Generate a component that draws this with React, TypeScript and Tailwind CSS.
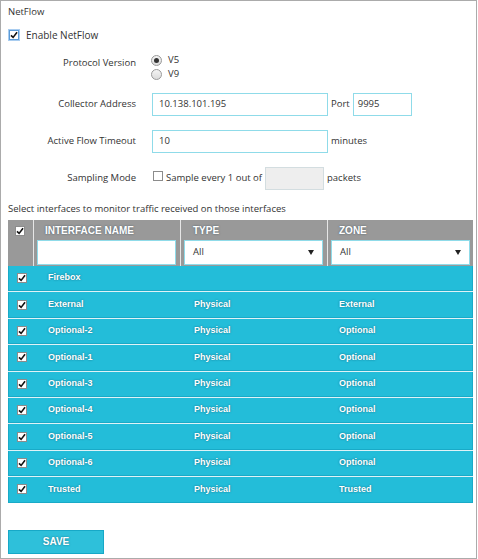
import React from 'react';

type Row = { name: string; type: string; zone: string };

const ROWS: Row[] = [
  { name: 'Firebox', type: '', zone: '' },
  { name: 'External', type: 'Physical', zone: 'External' },
  { name: 'Optional-2', type: 'Physical', zone: 'Optional' },
  { name: 'Optional-1', type: 'Physical', zone: 'Optional' },
  { name: 'Optional-3', type: 'Physical', zone: 'Optional' },
  { name: 'Optional-4', type: 'Physical', zone: 'Optional' },
  { name: 'Optional-5', type: 'Physical', zone: 'Optional' },
  { name: 'Optional-6', type: 'Physical', zone: 'Optional' },
  { name: 'Trusted', type: 'Physical', zone: 'Trusted' },
];

function Check({ checked = true, focus = false }: { checked?: boolean; focus?: boolean }) {
  return (
    <span
      className={`inline-flex h-[10px] w-[10px] shrink-0 items-center justify-center border bg-white ${
        focus ? 'border-[#5b9bd8] outline outline-1 outline-[#a9cdf0]' : 'border-[#8c8c8c]'
      }`}
    >
      {checked && (
        <svg viewBox="0 0 10 10" className="h-[8px] w-[8px]">
          <path d="M1.2 5.4 L3.9 8 L8.8 1.6" fill="none" stroke="#111" strokeWidth="2" />
        </svg>
      )}
    </span>
  );
}

function Radio({ checked }: { checked: boolean }) {
  return (
    <span className="inline-flex h-[11px] w-[11px] items-center justify-center rounded-full border border-[#9a9a9a] bg-gradient-to-b from-[#f4f4f4] to-[#dcdcdc]">
      {checked && <span className="h-[5px] w-[5px] rounded-full bg-[#333]" />}
    </span>
  );
}

function Select() {
  return (
    <div className="flex h-[25px] items-center justify-between border border-[#8fdbe9] bg-white pl-[8px] pr-[8px] font-['Open_Sans'] text-[9.5px] text-[#333]">
      <span>All</span>
      <svg viewBox="0 0 6 5" className="h-[5px] w-[6px]">
        <path d="M0 0 H6 L3 5 Z" fill="#222" />
      </svg>
    </div>
  );
}

const shadow = '[text-shadow:0_0_2px_rgba(0,40,60,0.55)]';

export default function App() {
  return (
    <div className="flex h-[559px] w-[477px] flex-col border border-[#ababab] bg-white pl-[7px] pr-[3px] font-['Open_Sans'] text-[9.5px] text-[#333]">
      <div className="mt-[4px] flex h-[14px] items-center">NetFlow</div>

      <div className="mt-[9px] flex h-[14px] items-center gap-[7px] pl-[1px]">
        <Check focus />
        <span className="text-[10px]">Enable NetFlow</span>
      </div>

      <div className="mt-[11px] flex">
        <div className="w-[128px] pt-[3px] text-right leading-[14px]">Protocol Version</div>
        <div className="ml-[15px] flex flex-col">
          <div className="flex h-[14px] items-center gap-[6px]">
            <Radio checked />
            <span>V5</span>
          </div>
          <div className="flex h-[14px] items-center gap-[6px]">
            <Radio checked={false} />
            <span>V9</span>
          </div>
        </div>
      </div>

      <div className="mt-[12px] flex items-center">
        <div className="w-[128px] text-right">Collector Address</div>
        <div className="ml-[16px] flex h-[23px] w-[176px] items-center border border-[#8fdbe9] pl-[6px]">10.138.101.195</div>
        <span className="ml-[3px]">Port</span>
        <div className="ml-[3px] flex h-[23px] w-[59px] items-center border border-[#8fdbe9] pl-[4px]">9995</div>
      </div>

      <div className="mt-[14px] flex items-center">
        <div className="w-[128px] text-right">Active Flow Timeout</div>
        <div className="ml-[16px] flex h-[23px] w-[176px] items-center border border-[#8fdbe9] pl-[6px]">10</div>
        <span className="ml-[3px]">minutes</span>
      </div>

      <div className="mt-[14px] flex items-center">
        <div className="w-[128px] text-right">Sampling Mode</div>
        <div className="ml-[17px]">
          <Check checked={false} />
        </div>
        <span className="ml-[3px]">Sample every 1 out of</span>
        <div className="ml-[3px] h-[23px] w-[59px] border border-[#d3dde0] bg-[#eeeeee]" />
        <span className="ml-[3px]">packets</span>
      </div>

      <div className="mt-[12px] flex h-[14px] items-center">
        Select interfaces to monitor traffic received on those interfaces
      </div>

      <div className="mt-[4px] w-[465px] font-['Liberation_Sans'] font-bold text-white">
        <div className="flex h-[46px] bg-[#999999]">
          <div className="flex w-[25px] justify-center pt-[6px] pr-[1px]">
            <Check />
          </div>
          <div className="w-px bg-[#e6e6e6]" />
          <div className="flex w-[146px] flex-col">
            <div className={`flex h-[20px] items-center pl-[11px] text-[10px] ${shadow}`}>INTERFACE NAME</div>
            <div className="ml-[3px] mr-[4px] h-[25px] border border-[#8fdbe9] bg-white" />
          </div>
          <div className="w-px bg-[#e6e6e6]" />
          <div className="flex w-[146px] flex-col">
            <div className={`flex h-[20px] items-center pl-[12px] text-[10px] ${shadow}`}>TYPE</div>
            <div className="ml-[3px] mr-[4px] font-normal">
              <Select />
            </div>
          </div>
          <div className="w-px bg-[#e6e6e6]" />
          <div className="flex flex-1 flex-col">
            <div className={`flex h-[20px] items-center pl-[11px] text-[10px] ${shadow}`}>ZONE</div>
            <div className="ml-[3px] mr-[3px] font-normal">
              <Select />
            </div>
          </div>
        </div>

        <div className="flex flex-col gap-px bg-[#dff3f7]">
          {ROWS.map((r) => (
            <div
              key={r.name}
              className={`flex h-[25.4px] items-center border-x border-b border-[#19aac7] bg-[#23bdd9] text-[9px] ${shadow}`}
            >
              <div className="flex w-[25px] justify-center pl-[1px]">
                <Check />
              </div>
              <div className="w-[147px] pl-[14px]">{r.name}</div>
              <div className="w-[146px] pl-[13px]">{r.type}</div>
              <div className="flex-1 pl-[12px]">{r.zone}</div>
            </div>
          ))}
        </div>
      </div>

      <button
        className={`mt-[27px] h-[24px] w-[96px] border border-[#17a8c7] bg-[#2ec0da] font-['Liberation_Sans'] text-[10px] font-bold text-white ${shadow}`}
      >
        SAVE
      </button>
    </div>
  );
}
